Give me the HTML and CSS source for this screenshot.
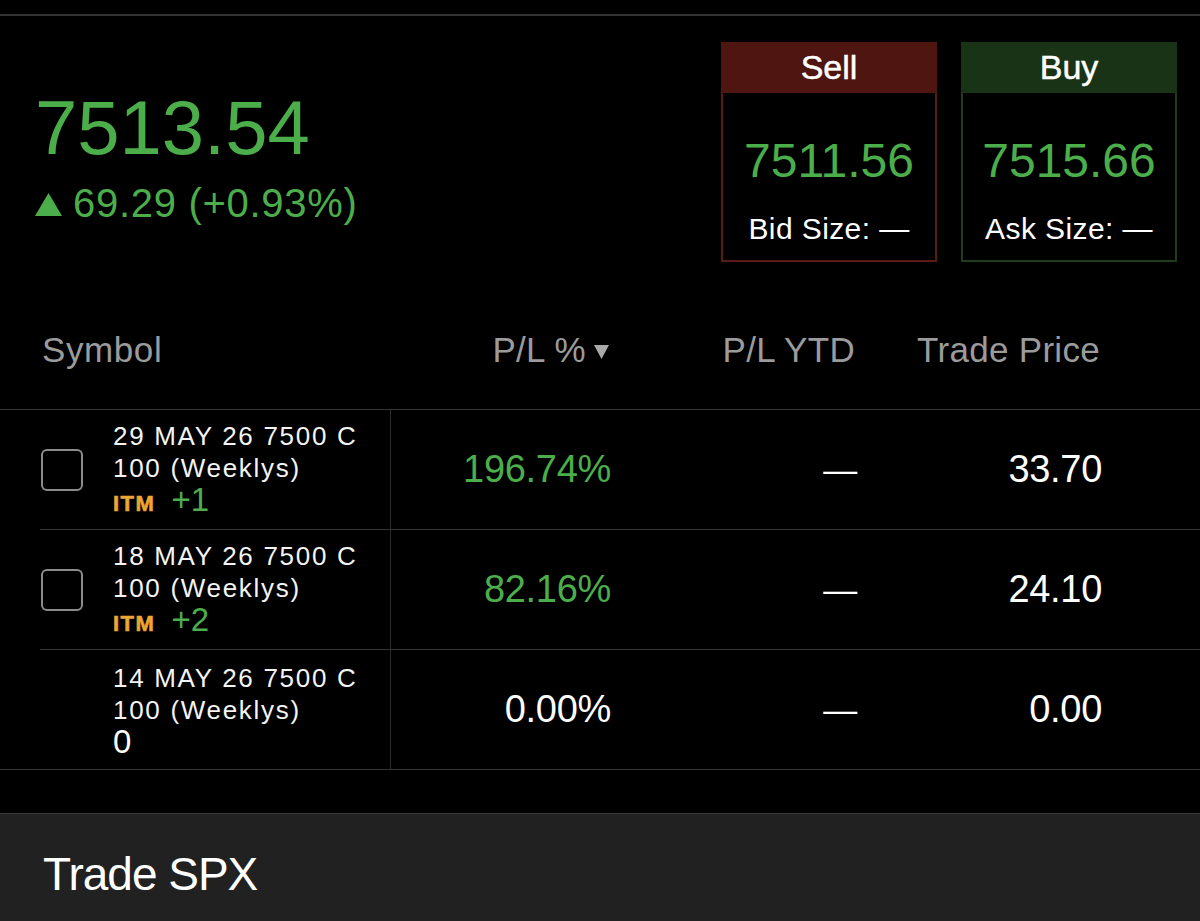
FILE: index.html
```html
<!DOCTYPE html>
<html lang="en">
<head>
    <meta charset="UTF-8">
    <meta name="viewport" content="width=device-width, initial-scale=1.0">
    <title>SPX Positions</title>
    <link rel="stylesheet" href="styles.css">
</head>
<body>
    <div class="topline"></div>

    <!-- Last price and the two quote boxes -->
    <section class="quote">
        <div class="last">
            <div class="last-price">7513.54</div>
            <div class="last-change">
                <svg class="up-arrow" width="27" height="23" viewBox="0 0 27 23"><polygon points="13.5,0 27,23 0,23" fill="currentColor"/></svg>
                <span>69.29 (+0.93%)</span>
            </div>
        </div>
        <div class="sides">
            <div class="side side-sell">
                <div class="side-head">Sell</div>
                <div class="side-price">7511.56</div>
                <div class="side-size">Bid Size: —</div>
            </div>
            <div class="side side-buy">
                <div class="side-head">Buy</div>
                <div class="side-price">7515.66</div>
                <div class="side-size">Ask Size: —</div>
            </div>
        </div>
    </section>

    <!-- Positions table -->
    <div class="pos-head">
        <div class="col-symbol">Symbol</div>
        <div class="col-num">P/L %<svg class="sort" width="15" height="15" viewBox="0 0 15 15"><polygon points="0,1 15,1 7.5,15" fill="currentColor"/></svg></div>
        <div class="col-num">P/L YTD</div>
        <div class="col-num">Trade Price</div>
    </div>

    <div class="pos-list">
        <div class="pos-row">
            <div class="cell-symbol">
                <span class="check"></span>
                <div class="sym-text">
                    <div>29 MAY 26 7500 C</div>
                    <div>100 (Weeklys)</div>
                    <div class="sym-qty"><span class="itm">ITM</span><span class="qty up">+1</span></div>
                </div>
            </div>
            <div class="cell-num up">196.74%</div>
            <div class="cell-num dash">—</div>
            <div class="cell-num">33.70</div>
        </div>
        <div class="pos-row">
            <div class="cell-symbol">
                <span class="check"></span>
                <div class="sym-text">
                    <div>18 MAY 26 7500 C</div>
                    <div>100 (Weeklys)</div>
                    <div class="sym-qty"><span class="itm">ITM</span><span class="qty up">+2</span></div>
                </div>
            </div>
            <div class="cell-num up">82.16%</div>
            <div class="cell-num dash">—</div>
            <div class="cell-num">24.10</div>
        </div>
        <div class="pos-row">
            <div class="cell-symbol">
                <span class="check-blank"></span>
                <div class="sym-text">
                    <div>14 MAY 26 7500 C</div>
                    <div>100 (Weeklys)</div>
                    <div class="sym-qty"><span class="qty">0</span></div>
                </div>
            </div>
            <div class="cell-num">0.00%</div>
            <div class="cell-num dash">—</div>
            <div class="cell-num">0.00</div>
        </div>
    </div>

    <div class="trade-bar">Trade SPX</div>
</body>
</html>
```

FILE: styles.css
```css
body {
    margin: 0;
    background: #000;
    color: #f4f4f4;
    font-family: "Liberation Sans", Arial, sans-serif;
    height: 921px;
    overflow: hidden;
}
.topline {
    margin-top: 14px;
    height: 2px;
    background: #343434;
}

/* quote area */
.quote {
    display: flex;
    justify-content: space-between;
    padding: 26px 23px 0 35px;
}
.last-price {
    margin-top: 48px;
    font-size: 76px;
    line-height: 1;
    color: #4cae4a;
}
.last-change {
    margin-top: 17px;
    display: flex;
    align-items: center;
    gap: 11px;
    font-size: 40px;
    line-height: 1;
    letter-spacing: 0.7px;
    color: #4cae4a;
}
.up-arrow {
    margin-top: 2px;
}
.sides {
    display: flex;
    gap: 24px;
}
.side {
    width: 212px;
    height: 216px;
    border: 2px solid;
    text-align: center;
}
.side-sell {
    border-color: #5a1a16;
}
.side-buy {
    border-color: #1f3c1d;
}
.side-head {
    height: 51px;
    margin: -2px -2px 0;
    display: flex;
    align-items: center;
    justify-content: center;
    font-size: 34px;
    color: #fff;
    -webkit-text-stroke: 0.5px #fff;
}
.side-sell .side-head {
    background: #4f1511;
}
.side-buy .side-head {
    background: #183316;
}
.side-price {
    margin-top: 44px;
    font-size: 48px;
    line-height: 1;
    color: #4cae4a;
}
.side-size {
    margin-top: 29px;
    font-size: 30px;
    line-height: 1;
    letter-spacing: 0.4px;
    color: #fff;
}

/* positions */
.pos-head {
    display: grid;
    grid-template-columns: 391px 218px 246px 245px;
    padding: 70px 0 42px;
    font-size: 35px;
    line-height: 1;
    color: #9b9b9b;
}
.pos-head .col-symbol {
    padding-left: 42px;
    letter-spacing: 0.6px;
}
.col-num {
    text-align: right;
    letter-spacing: 0.3px;
}
.sort {
    margin-left: 8px;
    vertical-align: 3px;
    color: #a8a8a8;
}
.pos-list {
    border-top: 1px solid #333;
    border-bottom: 1px solid #333;
}
.pos-row {
    margin-left: 40px;
    height: 119px;
    display: grid;
    grid-template-columns: 351px 220px 246px 245px;
    align-items: center;
}
.pos-row + .pos-row {
    border-top: 1px solid #333;
}
.cell-symbol {
    height: 100%;
    display: flex;
    align-items: center;
    border-right: 1px solid #2a2a2a;
    padding-left: 1px;
}
.check, .check-blank {
    width: 42px;
    height: 42px;
    box-sizing: border-box;
    margin-right: 30px;
    flex: none;
}
.check {
    border: 2px solid #8b8b8b;
    border-radius: 6px;
}
.sym-text {
    font-size: 26px;
    line-height: 32px;
    letter-spacing: 1.7px;
    color: #f4f4f4;
}
.sym-qty {
    display: flex;
    align-items: baseline;
    gap: 16px;
}
.itm {
    font-weight: bold;
    font-size: 22px;
    letter-spacing: 1.5px;
    color: #eaa733;
    -webkit-text-stroke: 0.6px #eaa733;
}
.qty {
    font-size: 33px;
    letter-spacing: 0;
    color: #fff;
}
.qty.up {
    color: #4cae4a;
}
.cell-num {
    text-align: right;
    font-size: 38px;
    letter-spacing: -0.3px;
    color: #fff;
}
.cell-num.up {
    color: #4cae4a;
}
.cell-num.dash {
    font-size: 34px;
}

/* bottom action bar */
.trade-bar {
    margin-top: 43px;
    border-top: 1px solid #3a3a3a;
    background: #212121;
    height: 70px;
    padding: 37px 0 0 43px;
    font-size: 46px;
    line-height: 1;
    letter-spacing: -1px;
    color: #fff;
}
```
